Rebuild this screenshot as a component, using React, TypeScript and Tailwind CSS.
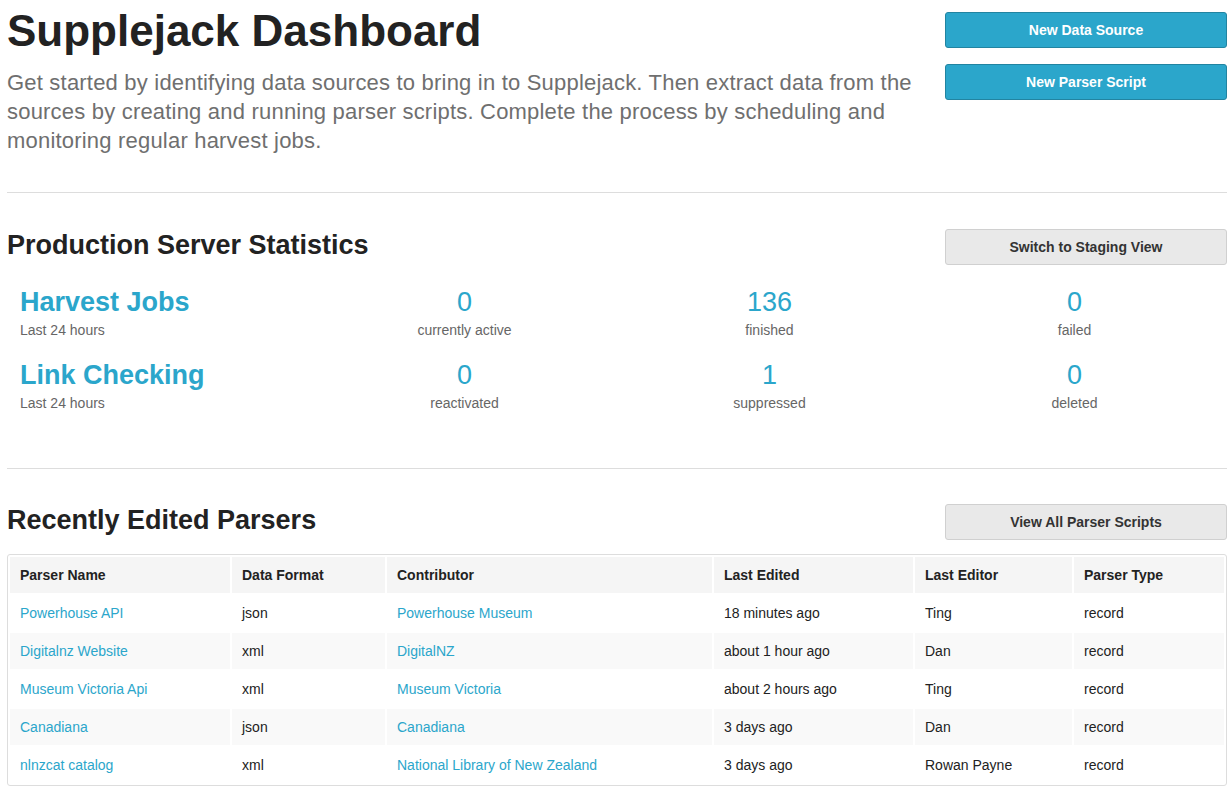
const parsers = [
  { name: 'Powerhouse API', format: 'json', contributor: 'Powerhouse Museum', edited: '18 minutes ago', editor: 'Ting', type: 'record' },
  { name: 'Digitalnz Website', format: 'xml', contributor: 'DigitalNZ', edited: 'about 1 hour ago', editor: 'Dan', type: 'record' },
  { name: 'Museum Victoria Api', format: 'xml', contributor: 'Museum Victoria', edited: 'about 2 hours ago', editor: 'Ting', type: 'record' },
  { name: 'Canadiana', format: 'json', contributor: 'Canadiana', edited: '3 days ago', editor: 'Dan', type: 'record' },
  { name: 'nlnzcat catalog', format: 'xml', contributor: 'National Library of New Zealand', edited: '3 days ago', editor: 'Rowan Payne', type: 'record' },
]

const BlueButton = ({ title }: { title: string }) => (
  <button
    type="button"
    className="h-[36px] w-full rounded-[3px] border border-[#2284a1] bg-[#2ba6cb] text-[14px] font-bold text-white"
  >
    {title}
  </button>
)

const GreyButton = ({ title }: { title: string }) => (
  <button
    type="button"
    className="h-[36px] w-[282px] rounded-[3px] border border-[#d0d0d0] bg-[#e9e9e9] text-[14px] font-bold text-[#333]"
  >
    {title}
  </button>
)

const Stat = ({ value, label }: { value: string; label: string }) => (
  <div className="flex flex-col items-center">
    <div className="text-[27px] leading-[32px] text-[#2ba6cb]">{value}</div>
    <div className="mt-[2px] text-[14px] leading-[20px] text-[#666]">{label}</div>
  </div>
)

const StatRow = ({ title, stats }: { title: string; stats: [string, string][] }) => (
  <div className="grid grid-cols-4">
    <div className="pl-[13px]">
      <div className="text-[27px] font-bold leading-[32px] text-[#2ba6cb]">{title}</div>
      <div className="mt-[2px] text-[14px] leading-[20px] text-[#666]">Last 24 hours</div>
    </div>
    {stats.map(([v, l]) => (
      <Stat key={l} value={v} label={l} />
    ))}
  </div>
)

const App = () => {
  return (
    <div className="bg-white pl-[7px] pr-[4px] pb-[6px] font-['Liberation_Sans',Arial,sans-serif] text-[#222]">
      {/* header */}
      <div className="flex gap-[15px]">
        <div className="flex-1">
          <h1 className="pt-[4px] text-[44px] font-bold leading-[53px] text-[#222]">Supplejack Dashboard</h1>
          <p className="mt-[11px] text-[22px] leading-[29px] tracking-[0.2px] text-[#6f6f6f]">
            Get started by identifying data sources to bring in to Supplejack. Then extract data from the sources by
            creating and running parser scripts. Complete the process by scheduling and monitoring regular harvest
            jobs.
          </p>
        </div>
        <div className="flex w-[282px] flex-col gap-[16px] pt-[12px]">
          <BlueButton title="New Data Source" />
          <BlueButton title="New Parser Script" />
        </div>
      </div>

      <hr className="mt-[37px] border-t border-[#ddd]" />

      {/* stats */}
      <div className="mt-[36px] flex items-start justify-between">
        <h3 className="text-[27px] font-bold leading-[32px]">Production Server Statistics</h3>
        <GreyButton title="Switch to Staging View" />
      </div>
      <div className="mt-[21px] flex flex-col gap-[19px]">
        <StatRow
          title="Harvest Jobs"
          stats={[
            ['0', 'currently active'],
            ['136', 'finished'],
            ['0', 'failed'],
          ]}
        />
        <StatRow
          title="Link Checking"
          stats={[
            ['0', 'reactivated'],
            ['1', 'suppressed'],
            ['0', 'deleted'],
          ]}
        />
      </div>

      <hr className="mt-[55px] border-t border-[#ddd]" />

      {/* parsers */}
      <div className="mt-[35px] flex items-start justify-between">
        <h3 className="text-[27px] font-bold leading-[32px]">Recently Edited Parsers</h3>
        <GreyButton title="View All Parser Scripts" />
      </div>

      <div className="mt-[14px] rounded-[3px] border border-[#ddd]">
        <table className="w-full table-fixed border-separate border-spacing-[2px] text-[14px]">
          <thead>
            <tr className="h-[36px] bg-[#f5f5f5] text-left font-bold">
              <th className="w-[220px] px-[10px]">Parser Name</th>
              <th className="w-[153px] px-[10px]">Data Format</th>
              <th className="w-[325px] px-[10px]">Contributor</th>
              <th className="w-[199px] px-[10px]">Last Edited</th>
              <th className="w-[157px] px-[10px]">Last Editor</th>
              <th className="px-[10px]">Parser Type</th>
            </tr>
          </thead>
          <tbody>
            {parsers.map((p, i) => (
              <tr key={p.name} className={i % 2 === 1 ? 'h-[36px] bg-[#f9f9f9]' : 'h-[36px]'}>
                <td className="px-[10px] text-[#2ba6cb]">{p.name}</td>
                <td className="px-[10px]">{p.format}</td>
                <td className="px-[10px] text-[#2ba6cb]">{p.contributor}</td>
                <td className="px-[10px]">{p.edited}</td>
                <td className="px-[10px]">{p.editor}</td>
                <td className="px-[10px]">{p.type}</td>
              </tr>
            ))}
          </tbody>
        </table>
      </div>
    </div>
  )
}

export default App
